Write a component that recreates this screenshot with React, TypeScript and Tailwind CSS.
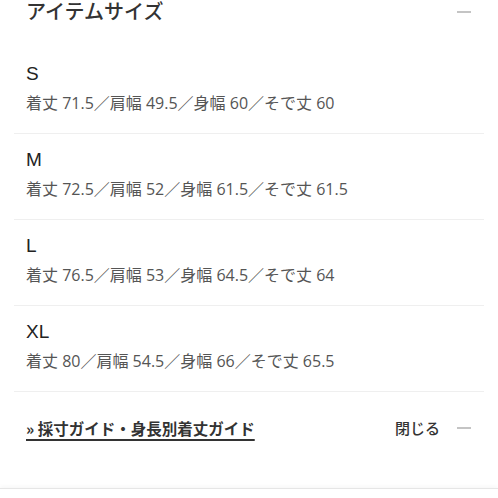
import React from 'react';

const sizes = [
  { label: 'S', spec: '着丈 71.5／肩幅 49.5／身幅 60／そで丈 60' },
  { label: 'M', spec: '着丈 72.5／肩幅 52／身幅 61.5／そで丈 61.5' },
  { label: 'L', spec: '着丈 76.5／肩幅 53／身幅 64.5／そで丈 64' },
  { label: 'XL', spec: '着丈 80／肩幅 54.5／身幅 66／そで丈 65.5' },
];

function Dash() {
  return <span className="block w-[14px] h-[1.5px] bg-[#c4c4c4]" />;
}

export default function App() {
  return (
    <div
      className="w-[498px] h-[498px] bg-white overflow-hidden text-[#333]"
      style={{ fontFamily: '"Open Sans", "Noto Sans CJK JP", sans-serif' }}
    >
      <div className="mx-[14px]">
        {/* Header */}
        <div className="flex items-center justify-between pl-[12px] pr-[13px]">
          <h2 className="text-[20px] leading-[24px] font-medium text-[#333]">アイテムサイズ</h2>
          <Dash />
        </div>

        {/* Size rows */}
        <div className="mt-[24px]">
          {sizes.map((s) => (
            <div key={s.label} className="border-b border-[#efefef] pl-[12px] pt-[14px] pb-[18px]">
              <div
                className="text-[19px] leading-[24px] text-[#222]"
                style={{ fontFamily: '"Liberation Sans", Arial, sans-serif' }}
              >
                {s.label}
              </div>
              <div className="mt-[5px] text-[16px] leading-[24px] text-[#555]">{s.spec}</div>
            </div>
          ))}
        </div>

        {/* Footer */}
        <div className="flex items-center justify-between pl-[12px] pr-[13px] pt-[24px] pb-[48px]">
          <a
            className="text-[15.5px] leading-[24px] font-bold text-[#333] underline decoration-[1.5px] underline-offset-[4px]"
            style={{ fontFamily: '"Noto Sans CJK JP", sans-serif' }}
          >
            » 採寸ガイド・身長別着丈ガイド
          </a>
          <div className="flex items-center gap-[17px]">
            <span className="text-[15px] leading-[24px] font-medium text-[#333]">閉じる</span>
            <Dash />
          </div>
        </div>
      </div>
      <div className="border-t border-[#e6e6e6] h-[20px] bg-white shadow-[0_-2px_4px_rgba(0,0,0,0.03)]" />
    </div>
  );
}
